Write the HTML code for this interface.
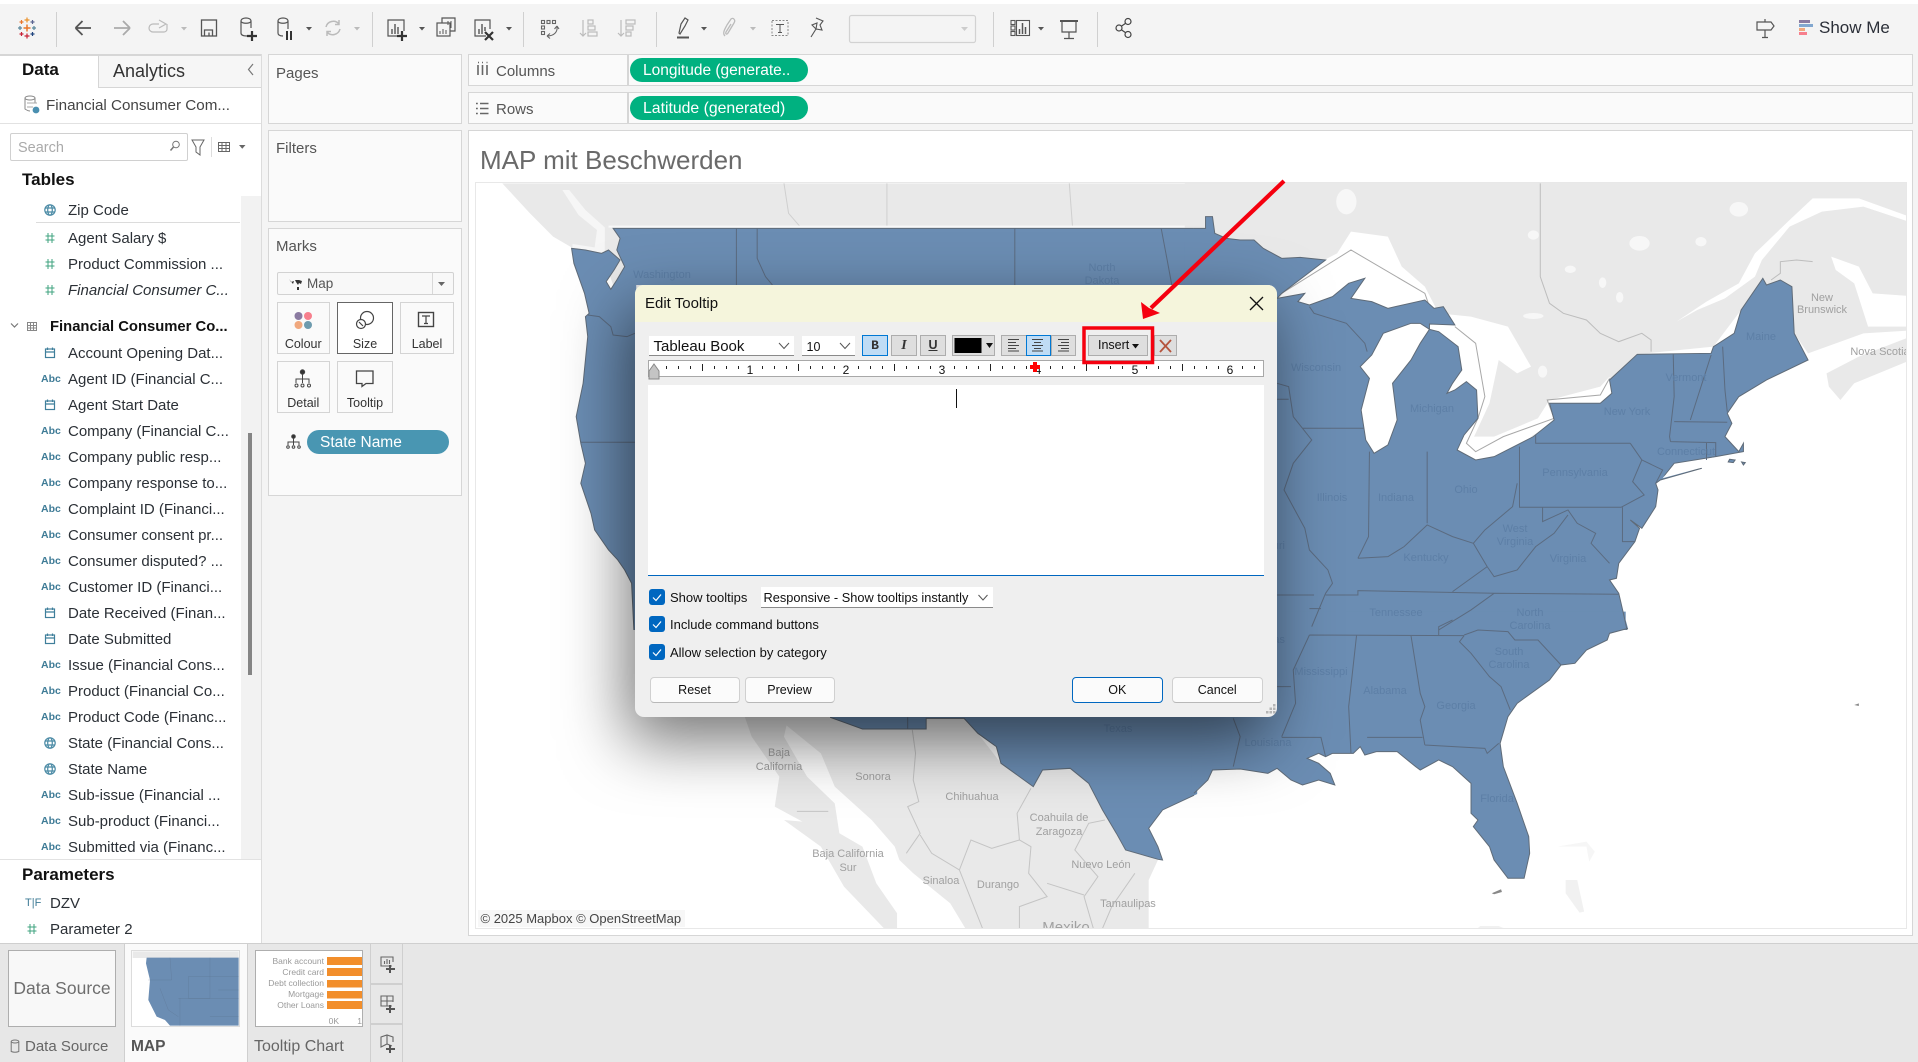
<!DOCTYPE html>
<html lang="en">
<head>
<meta charset="utf-8">
<title>Edit Tooltip</title>
<style>
html,body{margin:0;padding:0;width:1918px;height:1062px;overflow:hidden;background:#f4f4f4;font-family:"Liberation Sans",sans-serif;color:#2b3036}
.a{position:absolute;box-sizing:border-box}
.p{position:absolute;box-sizing:border-box;background:#fafafa;border:1.5px solid #d6d6d6}
.r{position:absolute;left:68px;height:20px;line-height:22px;font-size:15px;white-space:nowrap}
.abc{position:absolute;left:41px;height:14px;line-height:14px;font-size:10.5px;font-weight:bold;color:#3e7b96;white-space:nowrap}
.h{position:absolute;font-size:17px;font-weight:bold;color:#111;white-space:nowrap;line-height:22px;height:22px}
.l{position:absolute;font-size:15px;color:#555;white-space:nowrap;line-height:22px;height:20px}
.pill{position:absolute;color:#fff;font-size:15.5px;line-height:26px;white-space:nowrap;box-sizing:border-box}
.card{position:absolute;box-sizing:border-box;border:1.5px solid #d4d4d4;background:#fafafa;text-align:center;font-size:12.5px;color:#333;padding-top:33px;line-height:16px}
.d{position:absolute;font-size:13px;color:#111;white-space:nowrap}
.btn{position:absolute;box-sizing:border-box;background:#fbfbfb;border:1px solid #d0d0d0;border-bottom-color:#b8b8b8;border-radius:4px;text-align:center;font-size:12.5px;line-height:24px;color:#111;height:26px}
.tb{position:absolute;box-sizing:border-box;border:1px solid #adadad;background:#dedede;text-align:center;height:21px;line-height:19px;font-size:13px;color:#333}
.cb{position:absolute;left:649px;width:16px;height:16px;background:#0067c0;border-radius:3px}
.cmb{position:absolute;box-sizing:border-box;background:#fff;border-bottom:1px solid #8a8a8a;font-size:15px;color:#111;white-space:nowrap}
svg{position:absolute;left:0;top:0;overflow:visible}
svg text{font-family:"Liberation Sans",sans-serif}
</style>
</head>
<body>
<div class="a" style="left:0;top:0;width:1918px;height:4px;background:#fff"></div>

<svg width="1918" height="54" viewBox="0 0 1918 54" fill="none" stroke="#666" stroke-width="1.2">
 <g stroke="#d0d0d0" stroke-width="1"><path d="M56.5,12V47M372.5,12V47M523.5,12V47M656.5,12V47M993.5,12V47M1097.5,12V47"/></g>
 <g transform="translate(27,28)" stroke-width="1.2">
  <path d="M-3.5,0H3.5M0,-3.5V3.5" stroke="#e8762b" stroke-width="1.5"/>
  <path d="M-2.5,-8H2.5M0,-10.5V-5.5" stroke="#eb9129"/>
  <path d="M-2.5,8H2.5M0,5.500V10.500" stroke="#c72035"/>
  <path d="M-9,0H-5M-7,-2V2" stroke="#5b879b"/>
  <path d="M5,0H9M7,-2V2" stroke="#59879b"/>
  <path d="M-7.5,-6H-3.5M-5.5,-8V-4" stroke="#e8762b"/>
  <path d="M3.5,-6H7.5M5.5,-8V-4" stroke="#5b6591"/>
  <path d="M-7.5,6H-3.5M-5.5,4V8" stroke="#c72035"/>
  <path d="M3.5,6H7.5M5.5,4V8" stroke="#1f447e"/>
 </g>
 <path d="M75.5,28H91M75.5,28L82.5,21M75.5,28L82.5,35" stroke="#555" stroke-width="1.8"/>
 <path d="M114,28H130M130,28L123,21M130,28L123,35" stroke="#aaa" stroke-width="1.8"/>
 <g stroke="#bbb"><path d="M159,24H153a4,4 0 0 0 0,8H164a3,3 0 0 0 3,-3V24M159,20L166,24L159,28"/></g>
 <path d="M181,27h6l-3,3.5z" fill="#bbb" stroke="none"/>
 <g transform="translate(209,28)" stroke="#555" stroke-width="1.3"><rect x="-7.5" y="-8" width="15" height="16"/><path d="M-4.5,8V2H3.5V8M0,8V4.5"/></g>
 <g transform="translate(247,27)" stroke="#555"><path d="M-6,-6C-6,-10 4,-10 4,-6V1M-6,-6V6Q-6,9 0,9M-6,-6C-6,-3 4,-3 4,-6"/><path d="M5,4V14M0,9H10" stroke="#333" stroke-width="2.2"/></g>
 <g transform="translate(284,27)" stroke="#555"><path d="M-6,-6C-6,-10 4,-10 4,-6V2M-6,-6V6Q-6,9 -1,9M-6,-6C-6,-3 4,-3 4,-6"/><path d="M3,4V13M7,4V13" stroke="#333" stroke-width="2"/></g>
 <path d="M306,27h6l-3,3.5z" fill="#555" stroke="none"/>
 <g transform="translate(333,28)" stroke="#bbb" stroke-width="1.5"><path d="M-7,-1A7.5,7.5 0 0 1 6,-4M7,1A7.5,7.5 0 0 1 -6,4M6,-8V-3.5H2M-6,8V3.5H-2"/></g>
 <path d="M354,27h6l-3,3.5z" fill="#bbb" stroke="none"/>
 <g transform="translate(396,28)" stroke="#555"><path d="M3,8H-8V-8H8V3"/><path d="M-4,6V1M-1,6V-4M2,6V-1" stroke-width="1.4"/><path d="M6,3V13M1,8H11" stroke="#333" stroke-width="2.2"/></g>
 <path d="M419,27h6l-3,3.5z" fill="#555" stroke="none"/>
 <g transform="translate(446,27)" stroke="#555"><path d="M-4,-4V-9H9V4H4"/><rect x="-9" y="-4" width="13" height="13"/><path d="M-6,7V4M-3,7V2M0,7V3M2,-2V-6M5,1V-6" stroke-width="1"/></g>
 <g transform="translate(483,28)" stroke="#555"><path d="M3,8H-8V-8H7V1"/><path d="M-4,6V1M-1,6V-4M2,3V-1" stroke-width="1.4"/><path d="M2,4L10,12M10,4L2,12" stroke="#333" stroke-width="2.2"/></g>
 <path d="M506,27h6l-3,3.5z" fill="#555" stroke="none"/>
 <g transform="translate(549,28)" stroke="#666" stroke-width="1.1"><rect x="-7.5" y="-7.5" width="3" height="3"/><rect x="-2" y="-7.5" width="3" height="3"/><rect x="3.5" y="-7.5" width="3" height="3"/><rect x="-7.5" y="-2" width="3" height="3"/><rect x="-7.5" y="3.5" width="3" height="3"/><path d="M8,-2C9,4 5,8 -2,8M-2,8L1,5.5M-2,8L1,10.5M8,-2L5.5,1M8,-2L10,1"/></g>
 <g transform="translate(589,28)" stroke="#bbb"><path d="M-6,-8V8M-9,5L-6,8L-3,5"/><rect x="-1" y="-8" width="5" height="4"/><rect x="-1" y="-2" width="7" height="4"/><rect x="-1" y="4" width="9" height="4"/></g>
 <g transform="translate(627,28)" stroke="#bbb"><path d="M-6,-8V8M-9,5L-6,8L-3,5"/><rect x="-1" y="-8" width="9" height="4"/><rect x="-1" y="-2" width="7" height="4"/><rect x="-1" y="4" width="5" height="4"/></g>
 <g transform="translate(683,28)" stroke="#555"><path d="M-4,5L-2,-4L2,-10L5,-8L2,-2L-3,6Z"/><path d="M-6,9.5H6" stroke-width="2"/></g>
 <path d="M701,27h6l-3,3.5z" fill="#555" stroke="none"/>
 <g transform="translate(729,28)" stroke="#bbb" stroke-width="1.3"><path d="M-4,8C-7,5 -4,1 -2,-3L2,-9C4,-11 7,-8 5,-5L-1,5C-2,7 -4,6 -3,4L2,-4"/></g>
 <path d="M750,27h6l-3,3.5z" fill="#bbb" stroke="none"/>
 <g transform="translate(780,28)" stroke="#888" stroke-width="1"><rect x="-8" y="-7.5" width="16" height="15" stroke-dasharray="2 1.5"/><path d="M-4,-3.5H4M0,-3.5V4.5M-2,4.5H2" stroke="#555"/></g>
 <g transform="translate(817,28)" stroke="#555" stroke-width="1.100"><path d="M-1,-10L6,-7L3,-3L5,2L-1,1L-6,9M-1,1L-5,-3L0,-5Z"/></g>
 <rect x="849.5" y="15.5" width="126" height="27" rx="2" fill="#f4f4f4" stroke="#d2d2d2"/>
 <path d="M961,27h7l-3.5,4z" fill="#ccc" stroke="none"/>
 <g transform="translate(1020,28)" stroke="#555" stroke-width="1.1"><rect x="-9" y="-7.5" width="4" height="4"/><rect x="-9" y="-2" width="4" height="4"/><rect x="-9" y="3.5" width="4" height="4"/><rect x="-3.5" y="-7.5" width="13" height="15"/><path d="M-0.5,6V1M2.5,6V-5M5.5,6V-1" stroke-width="1.5"/></g>
 <path d="M1038,27h6l-3,3.5z" fill="#555" stroke="none"/>
 <g transform="translate(1069,28)" stroke="#555"><path d="M-9,-7H9" stroke-width="2"/><path d="M-7,-7V4H7V-7M0,4V10M-5,10.5H5"/></g>
 <g transform="translate(1124,28)" stroke="#444"><circle cx="4" cy="-6.5" r="3"/><circle cx="-5" cy="0" r="3"/><circle cx="4" cy="6.5" r="3"/><path d="M1.7,-4.7L-2.7,-1.8M-2.7,1.8L1.7,4.7"/></g>
 <g transform="translate(1765,28)" stroke="#555"><path d="M-8,-6H6L9,-2L6,2H-8ZM0,-9V-6M0,2V9M-3,9.5H3"/></g>
 <g stroke="none"><rect x="1799" y="20" width="11" height="3" fill="#8b7ba1"/><rect x="1799" y="24" width="14" height="3" fill="#82a7cf"/><rect x="1799" y="28" width="6" height="3" fill="#f0a87e"/><rect x="1799" y="32" width="8" height="3" fill="#f77f8d"/></g>
</svg>
<div class="a" style="left:1819px;top:18px;height:20px;line-height:20px;font-size:17px;color:#2b2f38;white-space:nowrap">Show Me</div>

<!-- data pane -->
<div class="a" style="left:0;top:54px;width:261.5px;height:889px;background:#fff;border-right:1.5px solid #dcdcdc"></div>
<div class="a" style="left:98px;top:54px;width:163px;height:33.5px;background:#f6f6f6;border:1.5px solid #d6d6d6;border-right:0"></div>
<div class="a" style="left:0;top:54px;width:261px;height:1.5px;background:#d6d6d6"></div>
<div class="h" style="left:22px;top:59px">Data</div>
<div class="h" style="left:113px;top:60px;font-weight:normal;color:#333;font-size:18px">Analytics</div>
<div class="a" style="left:0;top:122.5px;width:261px;height:1.5px;background:#e2e2e2"></div>
<div class="l" style="left:46px;top:94.5px;color:#444;font-size:15.2px">Financial Consumer Com...</div>
<div class="a" style="left:10px;top:133px;width:178px;height:28px;border:1.5px solid #d0d0d0;border-radius:2px;background:#fff"></div>
<div class="l" style="left:18px;top:136.5px;color:#aaa;font-size:14.5px">Search</div>
<div class="h" style="left:22px;top:169px">Tables</div>
<div class="a" style="left:241px;top:196px;width:20px;height:663px;background:#f2f2f2"></div>
<div class="a" style="left:248px;top:433px;width:4px;height:242px;background:#858585"></div>
<div class="a" style="left:36px;top:222px;width:204px;height:1px;background:#dcdcdc"></div>
<div class="a" style="left:0;top:858.5px;width:261px;height:1.5px;background:#e2e2e2"></div>

<svg width="262" height="943" viewBox="0 0 262 943" fill="none">
 <defs>
  <g id="hs" stroke="#3fa37f" stroke-width="1"><path d="M-4.5,-2H4.5M-4.5,2H4.5M-2,-5V5M2,-5V5"/></g>
  <g id="gl" stroke="#4a8aa5" stroke-width="1.2"><circle r="5.2"/><ellipse rx="2.3" ry="5.2"/><path d="M-5,-2H5M-5,2H5"/></g>
  <g id="dt" stroke="#3f7f9b" stroke-width="1.2"><rect x="-4.5" y="-4" width="9" height="8.5"/><path d="M-4.5,-1H4.5M-2.5,-5.5V-3M2.5,-5.5V-3"/></g>
 </defs>
 <path d="M253,64L248.5,69.5L253,75" stroke="#777" stroke-width="1.2"/>
 <g transform="translate(31,105)" stroke="#888"><ellipse cx="-1" cy="-7" rx="5" ry="2"/><path d="M-6,-7V4Q-3,6 -1,6M4,-7V-2"/><path d="M-4,-2L6,-2M-4,2H2" stroke="#aaa"/><circle cx="5" cy="5" r="3.4" fill="#4a8fb0" stroke="none"/></g>
 <g transform="translate(175,146)" stroke="#777"><circle cx="1" cy="-1.5" r="3.3"/><path d="M-1.5,1L-4.5,4.5" stroke-width="1.5"/></g>
 <path d="M192,140H204L200,147V155L196,152V147Z" stroke="#666"/>
 <path d="M211.5,137V157" stroke="#ddd"/>
 <g stroke="#666" stroke-width="1"><rect x="218.5" y="142.5" width="11" height="9"/><path d="M218.5,145.5H229.5M218.5,148.5H229.5M222,142.5V151.5M226,142.5V151.5"/></g>
 <path d="M239,145h6.5l-3.25,3.8z" fill="#666"/>
 <use href="#gl" x="50" y="210"/>
 <use href="#hs" x="50" y="238"/><use href="#hs" x="50" y="264"/><use href="#hs" x="50" y="290"/>
 <path d="M11,323.5L14.5,327L18,323.5" stroke="#777" stroke-width="1.2"/>
 <g stroke="#888" stroke-width="1"><rect x="27.5" y="322.5" width="9" height="8" /><path d="M27.5,325.5H36.5M27.5,328H36.5M30.5,322.5V330.5M33.5,322.5V330.5"/></g>
 <use href="#dt" x="50" y="353"/><use href="#dt" x="50" y="405"/>
 <use href="#dt" x="50" y="613"/><use href="#dt" x="50" y="639"/>
 <use href="#gl" x="50" y="743"/><use href="#gl" x="50" y="769"/>
 <use href="#hs" x="32" y="929"/>
</svg>

<div class="r" style="top:199.5px">Zip Code</div>
<div class="r" style="top:228px">Agent Salary $</div>
<div class="r" style="top:254px">Product Commission ...</div>
<div class="r" style="top:280px;font-style:italic">Financial Consumer C...</div>
<div class="r" style="top:316px;left:50px;font-weight:bold;color:#111;font-size:14.8px">Financial Consumer Co...</div>
<div class="r" style="top:343px">Account Opening Dat...</div>
<div class="abc" style="top:372px">Abc</div><div class="r" style="top:369px">Agent ID (Financial C...</div>
<div class="r" style="top:395px">Agent Start Date</div>
<div class="abc" style="top:424px">Abc</div><div class="r" style="top:421px">Company (Financial C...</div>
<div class="abc" style="top:450px">Abc</div><div class="r" style="top:447px">Company public resp...</div>
<div class="abc" style="top:476px">Abc</div><div class="r" style="top:473px">Company response to...</div>
<div class="abc" style="top:502px">Abc</div><div class="r" style="top:499px">Complaint ID (Financi...</div>
<div class="abc" style="top:528px">Abc</div><div class="r" style="top:525px">Consumer consent pr...</div>
<div class="abc" style="top:554px">Abc</div><div class="r" style="top:551px">Consumer disputed? ...</div>
<div class="abc" style="top:580px">Abc</div><div class="r" style="top:577px">Customer ID (Financi...</div>
<div class="r" style="top:603px">Date Received (Finan...</div>
<div class="r" style="top:629px">Date Submitted</div>
<div class="abc" style="top:658px">Abc</div><div class="r" style="top:655px">Issue (Financial Cons...</div>
<div class="abc" style="top:684px">Abc</div><div class="r" style="top:681px">Product (Financial Co...</div>
<div class="abc" style="top:710px">Abc</div><div class="r" style="top:707px">Product Code (Financ...</div>
<div class="r" style="top:733px">State (Financial Cons...</div>
<div class="r" style="top:759px">State Name</div>
<div class="abc" style="top:788px">Abc</div><div class="r" style="top:785px">Sub-issue (Financial ...</div>
<div class="abc" style="top:814px">Abc</div><div class="r" style="top:811px">Sub-product (Financi...</div>
<div class="abc" style="top:840px">Abc</div><div class="r" style="top:837px">Submitted via (Financ...</div>
<div class="h" style="left:22px;top:864px">Parameters</div>
<div class="abc" style="top:896px;left:25px;color:#3e7b96;font-weight:normal;font-size:11px">T|F</div>
<div class="r" style="top:892.5px;left:50px">DZV</div>
<div class="r" style="top:918.5px;left:50px">Parameter 2</div>

<!-- cards -->
<div class="p" style="left:268px;top:54px;width:193.5px;height:69.5px"></div>
<div class="l" style="left:276px;top:63px">Pages</div>
<div class="p" style="left:268px;top:130px;width:193.5px;height:91.5px"></div>
<div class="l" style="left:276px;top:138px">Filters</div>
<div class="p" style="left:268px;top:228px;width:193.5px;height:268px"></div>
<div class="l" style="left:276px;top:236px">Marks</div>
<div class="a" style="left:276.5px;top:272px;width:177px;height:23px;border:1.5px solid #d2d2d2;border-radius:2px;background:#f8f8f8"></div>
<div class="a" style="left:431.5px;top:273px;width:1px;height:21px;background:#d8d8d8"></div>
<div class="l" style="left:307px;top:273px;font-size:13.5px">Map</div>
<div class="card" style="left:276.5px;top:302px;width:53.5px;height:52px">Colour</div>
<div class="card" style="left:337px;top:302px;width:56px;height:52px;background:#fff;border-color:#666">Size</div>
<div class="card" style="left:400px;top:302px;width:54px;height:52px">Label</div>
<div class="card" style="left:276.5px;top:361px;width:53.5px;height:52px">Detail</div>
<div class="card" style="left:337px;top:361px;width:56px;height:52px">Tooltip</div>
<div class="pill" style="left:307px;top:430px;width:142px;height:24px;background:#4996b2;border-radius:12px;padding-left:13px">State Name</div>
<svg width="480" height="500" viewBox="0 0 480 500" fill="none">
 <g fill="#333" stroke="none"><path d="M289,279l2,3 3,-1 -1,3zM295,280h4l3,1 -1,3 -2,-1 -1,2 -2,-3zM297,287h2v3h-2z"/></g>
 <path d="M438,282h7l-3.5,4z" fill="#666"/>
 <circle cx="298.5" cy="316" r="4" fill="#8b7ba1"/><circle cx="308" cy="316" r="4" fill="#f77f8d"/>
 <circle cx="298.5" cy="325" r="4" fill="#f0a87e"/><circle cx="308" cy="325" r="4" fill="#6d9bae"/>
 <g stroke="#444" stroke-width="1.2"><circle cx="367" cy="318" r="6.5"/><circle cx="361" cy="324" r="4.5" fill="#fff"/><path d="M359,322L363,326"/></g>
 <g stroke="#444" stroke-width="1.2"><rect x="418.5" y="312.5" width="15" height="14" stroke-width="1.4"/><path d="M422,316H430M426,316V323.5M424,323.5H428"/></g>
 <g stroke="#444" stroke-width="1"><circle cx="302.5" cy="372" r="2.2" fill="#333"/><path d="M302.5,374V379M296,383V379H309V383M302.5,379V383"/><circle cx="296.5" cy="385.5" r="1.5" fill="#fff"/><circle cx="302.5" cy="385.5" r="1.5" fill="#fff"/><circle cx="309" cy="385.5" r="1.5" fill="#fff"/></g>
 <path d="M356.5,371H373V383.5H366L362,386.5V383.5H356.5Z" stroke="#444" stroke-width="1.3"/>
 <g stroke="#444" stroke-width="1"><circle cx="293.5" cy="436.5" r="1.8" fill="#333"/><path d="M293.5,438V442M288,445V442H299V445M293.5,442V445"/><circle cx="288" cy="447" r="1.3"/><circle cx="293.5" cy="447" r="1.3"/><circle cx="299" cy="447" r="1.3"/></g>
</svg>

<!-- shelves -->
<div class="p" style="left:468px;top:54px;width:1445px;height:32px"></div>
<div class="p" style="left:468px;top:92px;width:1445px;height:31.5px"></div>
<div class="a" style="left:627px;top:54px;width:1.5px;height:32px;background:#d6d6d6"></div>
<div class="a" style="left:627px;top:92px;width:1.5px;height:31.5px;background:#d6d6d6"></div>
<div class="l" style="left:496px;top:61px">Columns</div>
<div class="l" style="left:496px;top:99px">Rows</div>
<svg width="500" height="125" viewBox="0 0 500 125" fill="none" stroke="#666" stroke-width="1.6"><path d="M478,65V75M482.5,65V75M487,65V75" /><path d="M478,62.5h1M482,62.5h1M486.500,62.5h1"/><path d="M476,103.500h1.800M480,103.500H488.500M476,108.500h1.800M480,108.500H488.500M476,113.500h1.800M480,113.500H488.500"/></svg>
<div class="pill" style="left:630px;top:58px;width:178px;height:24px;background:#00b180;border-radius:12px;padding-left:13px">Longitude (generate..</div>
<div class="pill" style="left:630px;top:96px;width:178px;height:24px;background:#00b180;border-radius:12px;padding-left:13px;font-size:15.8px">Latitude (generated)</div>

<!-- viz -->
<div class="a" style="left:468px;top:130px;width:1445px;height:805.500px;background:#fff;border:1.500px solid #d6d6d6"></div>
<div class="a" style="left:480px;top:143px;height:34px;line-height:34px;font-size:26px;color:#6a6a6a;white-space:nowrap">MAP mit Beschwerden</div>
<div class="a" style="left:475px;top:182px;width:1431.500px;height:746.500px;background:#fff;border:1px solid #e8e8e8"></div>

<svg width="1918" height="1062" viewBox="0 0 1918 1062" fill="none">
 <defs><clipPath id="mc"><rect x="476" y="183" width="1430" height="745"/></clipPath></defs>
 <g clip-path="url(#mc)">
  <!-- Canada west -->
  <g transform="matrix(.4617 0 0 .3333 470 170)">
   <path fill="#e9e9e9" d="M70,40H1600V420H330L285,250L220,232L180,200L130,130L100,85Z"/>
   <path fill="#f6f6f6" d="M200,60L215,60L250,120L292,172V250L222,232V222L270,232L275,180L235,135Z"/>
   <path fill="none" stroke="#cfcfcf" vector-effect="non-scaling-stroke" d="M680,40L690,130L715,170M903,40V170M1298,40L1305,170"/>
   <path fill="none" stroke="#f8f8f8" stroke-width="2" vector-effect="non-scaling-stroke" d="M300,170H1600"/>
  </g>
  <!-- Canada east -->
  <g transform="matrix(.4617 0 0 .3333 1194 170)">
   <path fill="#e9e9e9" d="M-20,37H1570V480L1450,490L1330,550L1300,490L1232,325L1185,420L1125,530L960,553L800,800H-20Z"/>
   <path fill="#e9e9e9" d="M1370,610L1440,560L1570,490V560L1430,640L1400,690L1375,650Z"/>
   <path fill="#fff" d="M180,390L240,300L310,250L340,185L420,200L450,290L500,350L530,430L600,440L680,470L730,590L700,610L660,570L640,700L600,820L650,800L745,745L770,690L880,650L900,620L905,690L780,760L640,870L570,840L300,600Z"/>
   <path fill="#fff" d="M1045,455L1110,395L1180,340L1215,250L1290,150L1340,85L1440,85L1570,150V165L1450,110L1360,125L1290,170L1230,270L1215,320L1150,385L1090,420Z"/>
   <path fill="#fff" d="M1380,260L1440,290L1470,370L1570,380V470L1460,470L1430,340L1390,300Z"/>
   <g fill="#f7f7f7"><ellipse cx="330" cy="95" rx="22" ry="38"/><ellipse cx="965" cy="220" rx="22" ry="22"/><ellipse cx="1098" cy="215" rx="12" ry="14"/><ellipse cx="735" cy="195" rx="12" ry="14"/><ellipse cx="735" cy="438" rx="22" ry="9"/><ellipse cx="885" cy="338" rx="8" ry="16"/><ellipse cx="815" cy="298" rx="12" ry="11"/><ellipse cx="922" cy="382" rx="8" ry="16"/><ellipse cx="755" cy="605" rx="10" ry="18"/><ellipse cx="1180" cy="118" rx="20" ry="22"/></g>
   <g fill="none" stroke="#bdbdbd"><path vector-effect="non-scaling-stroke" d="M750,40V320L770,400L800,430L850,450L880,490L920,515L970,490L990,510L990,545"/><path vector-effect="non-scaling-stroke" d="M1250,330L1270,310L1270,275L1305,270L1340,275"/><path vector-effect="non-scaling-stroke" stroke="#a8a8a8" d="M190,370L340,240L500,370L510,410M565,470L610,520L630,680L615,745L590,820L610,845L670,800L780,745L765,690L880,675L900,625"/></g>
  </g>
  <!-- Mexico -->
  <g transform="matrix(.4617 0 0 .3333 470 620)">
   <path fill="#e9e9e9" d="M595,290H690L680,350L730,470L790,550L800,640L850,680L880,790L925,880V930H900L810,800L760,680L680,600L720,605L660,560L670,470L610,350Z"/>
   <path fill="#e9e9e9" d="M680,290H1070L1100,340L1150,430L1220,500L1240,450L1300,445L1340,490L1400,640L1420,690L1490,720L1470,780V930H1075L1040,850L960,760L930,720L920,680L870,600L790,500L760,400L680,310Z"/>
   <g fill="none" stroke="#c4c4c4"><path vector-effect="non-scaling-stroke" d="M958,330L965,400L960,480L972,545L948,560L975,640L945,700M975,645L1000,700L1060,750L1110,925M1060,750L1085,660L1130,685L1190,660L1215,680L1210,760L1250,830L1190,860L1190,925M1215,505L1185,580L1190,660M1375,600L1340,610L1310,690L1360,770L1330,830L1350,925M1440,760L1390,860L1370,925M1250,790L1330,825M708,574H776"/></g>
  </g>
  <!-- USA fill -->
  <g fill="#6b8db3">
   <path transform="matrix(.4617 0 0 .3333 470 170)" d="M355,1380L350,1240L335,1200L320,1170L300,1140L270,1080L262,1030L240,940L250,880L240,820L230,740L245,640L255,500L250,440L258,430L248,370L225,280L220,235L250,240L285,250L300,240L325,270L312,300L295,335L305,358L318,330L335,290L318,240L325,205L310,175H1575V345H360V1380Z"/>
   <path transform="matrix(.4617 0 0 .3333 1194 170)" d="M-20,175H25V140H40L45,190L70,205L100,210L130,210L150,235L190,265L230,262L285,270L190,370L180,385L240,370L225,395L250,405L300,380L335,340L370,325L340,385L385,395L420,415L500,390L520,415L540,410L565,465L510,462L510,478L530,485L572,530L580,600L560,640L548,670L565,660L590,635L612,660L615,745L585,795L570,840L610,870L650,860L735,800L780,750L770,700L880,700L905,670L900,630L960,553L1120,550L1125,530L1170,490L1185,420L1232,325L1240,345L1270,330L1295,350L1300,490L1330,570L1240,630L1180,680L1155,730L1165,760L1150,800L1180,845L1190,820L1190,845L1130,860L1040,880L1020,915L1100,895L1010,930L1000,940L1005,960L1000,1010L970,1075L945,1050L965,1075L955,1115L920,1180L915,1225L900,1230L920,1270L930,1330L938,1380H-20Z"/>
   <path transform="matrix(.4617 0 0 .3333 470 620)" d="M780,288V292L850,327H988V295H1070L1100,340L1140,380L1150,430L1220,500L1240,450L1300,445L1340,490L1370,570L1400,640L1420,690L1490,718L1500,720L1490,680L1470,625L1500,570L1575,522V288Z"/>
   <path transform="matrix(.4617 0 0 .3333 1194 620)" d="M-5,523L30,480L40,450L100,447L160,460L180,445L210,480L235,495L270,480L305,495L295,460L270,430L245,415L270,400L285,410L300,400L345,400L360,380L370,405L395,395L440,395L480,440L490,450L530,420L560,440L600,490L600,580L615,600L605,620L640,680L650,720L680,775L715,775L727,700L725,650L700,550L670,440L663,370L680,290L700,250L770,180L795,135L825,130L850,90L895,60L900,40L940,25L935,0V-25H-5Z"/>
  </g>
  <!-- USA coast strokes -->
  <g fill="none" stroke="#5f6b78" stroke-width="1">
   <path transform="matrix(.4617 0 0 .3333 470 170)" vector-effect="non-scaling-stroke" d="M355,1380L350,1240L335,1200L320,1170L300,1140L270,1080L262,1030L240,940L250,880L240,820L230,740L245,640L255,500L250,440L258,430L248,370L225,280L220,235L250,240L285,250L300,240L325,270L312,300L295,335L305,358L318,330L335,290L318,240L325,205L310,175H1568"/>
   <path transform="matrix(.4617 0 0 .3333 1194 170)" vector-effect="non-scaling-stroke" d="M0,175H25V140H40L45,190L70,205L100,210L130,210L150,235L190,265L230,262L285,270L190,370L180,385L240,370L225,395L250,405L300,380L335,340L370,325L340,385L385,395L420,415L500,390L520,415L540,410L565,465L510,462L510,478L530,485L572,530L580,600L560,640L548,670L565,660L590,635L612,660L615,745L585,795L570,840L610,870L650,860L735,800L780,750L770,700L880,700L905,670L900,630L960,553L1120,550L1125,530L1170,490L1185,420L1232,325L1240,345L1270,330L1295,350L1300,490L1330,570L1240,630L1180,680L1155,730L1165,760L1150,800L1180,845L1190,820L1190,845L1130,860L1040,880L1020,915L1100,895L1010,930L1000,940L1005,960L1000,1010L970,1075L945,1050L965,1075L955,1115L920,1180L915,1225L900,1230L920,1270L930,1330L938,1380"/>
   <path transform="matrix(.4617 0 0 .3333 470 620)" vector-effect="non-scaling-stroke" d="M780,292L850,327H988V295H1070L1100,340L1140,380L1150,430L1220,500L1240,450L1300,445L1340,490L1370,570L1400,640L1420,690L1490,718L1500,720L1490,680L1470,625L1500,570L1568,526"/>
   <path transform="matrix(.4617 0 0 .3333 1194 620)" vector-effect="non-scaling-stroke" d="M0,520L30,480L40,450L100,447L160,460L180,445L210,480L235,495L270,480L305,495L295,460L270,430L245,415L270,400L285,410L300,400L345,400L360,380L370,405L395,395L440,395L480,440L490,450L530,420L560,440L600,490L600,580L615,600L605,620L640,680L650,720L680,775L715,775L727,700L725,650L700,550L670,440L663,370L680,290L700,250L770,180L795,135L825,130L850,90L895,60L900,40L940,25"/>
  </g>
  <g transform="matrix(.4617 0 0 .3333 1194 170)">
   <path fill="#fff" stroke="#5f6b78" vector-effect="non-scaling-stroke" d="M360,590L385,555L410,490L470,460L490,460L510,478L490,520L470,570L430,640L440,750L420,825L390,850L372,810L362,720L380,625Z"/>
   <path fill="#fff" d="M1015,925L1040,885L1130,862L1100,893Z"/>
   <path fill="#6b8db3" stroke="#5f6b78" vector-effect="non-scaling-stroke" d="M1160,868L1172,870L1168,878L1157,876ZM1186,876L1194,878L1190,885Z"/>
  </g>
  <!-- state lines -->
  <g fill="none" stroke="#5b6b80" stroke-width="1">
   <g transform="matrix(.4617 0 0 .3333 470 170)">
    <path vector-effect="non-scaling-stroke" d="M577,175V345M622,175V265L640,320L655,345M1180,175V345M1497,175L1510,270L1520,345M240,817H357M255,435L280,440L305,470L310,495L340,500L357,490"/>
   </g>
   <g transform="matrix(.4617 0 0 .3333 1194 170)">
    <path vector-effect="non-scaling-stroke" d="M505,845V1060M380,845L378,1100L355,1165M235,775H367M180,640L205,650L215,740L255,810L215,880L195,960L240,1075L250,1140L290,1200L300,1240L285,1270L255,1370M355,1165L420,1160L455,1130L505,1065L560,1100L605,1120M605,1120L635,1190M605,1120L630,1080L690,1010L700,940M705,830V1012H925M740,795V820H945M945,820L970,870L950,935L975,975L925,1012M970,870L1015,900L1000,940M755,1012V1055L810,1020L830,1060L870,1090L860,1120L900,1180M635,1190L650,1220L700,1200L740,1130L780,1090L810,1035M635,1190L560,1265M285,1275H355V1262L650,1270L920,1273M650,1270L600,1320L530,1380M1038,553L1040,680L1030,800L1032,815M1120,555L1075,750M1145,530L1150,660L1155,725M1040,755L1155,757M1032,815L1130,818V860M1110,818V870M250,410L260,430L330,460L370,520L375,545M180,688H205M180,1275H260M250,1316H275M928,1012V1115H955"/>
   </g>
   <g transform="matrix(.4617 0 0 .3333 1194 620)">
    <path vector-effect="non-scaling-stroke" d="M250,45L585,47M352,47L335,260L340,400M470,47L490,220L500,260L490,300L500,375M585,47L575,65L600,100L640,170L665,200L685,270M585,45L615,30L680,35L695,60H745L795,135M530,45V20L560,0M375,352H495M500,375L630,385L635,400L660,370M190,352H275L285,410M250,45L215,150L220,250L190,350M180,200H210M85,295L100,350L85,440"/>
   </g>
   <g transform="matrix(.4617 0 0 .3333 470 620)"><path vector-effect="non-scaling-stroke" d="M948,292V327"/></g>
  </g>
  <!-- small islands -->
  <g transform="matrix(.4617 0 0 .3333 1194 620)" fill="#f1f1f1"><path d="M805,780L830,780L845,875L835,878L805,820Z"/><path d="M620,918L660,918L680,930H610Z"/><path d="M787,680L850,665L868,695L856,725L850,680Z" fill="#f6f6f6"/><path fill="#888" d="M645,820L665,808L667,816L650,823ZM1430,255L1440,250L1440,258Z"/></g>
  <!-- map labels -->
  <g font-size="11" text-anchor="middle" fill="#5d7fa6">
   <text x="662" y="278">Washington</text><text x="1102" y="271">North</text><text x="1102" y="284">Dakota</text>
   <text x="1316" y="371">Wisconsin</text><text x="1432" y="412">Michigan</text><text x="1627" y="415">New York</text><text x="1686" y="381">Vermont</text><text x="1761" y="340">Maine</text><text x="1686" y="455">Connecticut</text><text x="1575" y="476">Pennsylvania</text><text x="1466" y="493">Ohio</text><text x="1332" y="501">Illinois</text><text x="1396" y="501">Indiana</text><text x="1515" y="532">West</text><text x="1515" y="545">Virginia</text><text x="1426" y="561">Kentucky</text><text x="1568" y="562">Virginia</text><text x="1396" y="616">Tennessee</text><text x="1530" y="616">North</text><text x="1530" y="629">Carolina</text><text x="1509" y="655">South</text><text x="1509" y="668">Carolina</text><text x="1321" y="675">Mississippi</text><text x="1385" y="694">Alabama</text><text x="1456" y="709">Georgia</text><text x="1268" y="746">Louisiana</text><text x="1497" y="802">Florida</text><text x="1118" y="732">Texas</text>
   <text x="1285" y="549" text-anchor="end">Missouri</text><text x="1285" y="643" text-anchor="end">Arkansas</text>
  </g>
  <g font-size="11" text-anchor="middle" fill="#a0a0a0">
   <text x="1822" y="301">New</text><text x="1822" y="313">Brunswick</text><text x="1880" y="355">Nova Scotia</text>
   <text x="779" y="756">Baja</text><text x="779" y="770">California</text><text x="873" y="780">Sonora</text><text x="972" y="800">Chihuahua</text><text x="1059" y="821">Coahuila de</text><text x="1059" y="835">Zaragoza</text><text x="848" y="857">Baja California</text><text x="848" y="871">Sur</text><text x="941" y="884">Sinaloa</text><text x="998" y="888">Durango</text><text x="1101" y="868">Nuevo León</text><text x="1128" y="907">Tamaulipas</text>
   <text x="1066" y="932" font-size="15">Mexiko</text>
  </g>
 </g>
</svg>
<div class="a" style="left:478px;top:909.500px;width:207px;height:17.500px;background:rgba(245,245,245,.8);font-size:13px;line-height:18px;color:#444;padding-left:2.500px;white-space:nowrap">© 2025 Mapbox © OpenStreetMap</div>

<!-- bottom tabs -->
<div class="a" style="left:0;top:943px;width:1918px;height:119px;background:#e7e7e7;border-top:1.500px solid #cfcfcf"></div>
<div class="a" style="left:123.500px;top:944px;width:124px;height:118px;background:#fafafa;border-left:1.500px solid #cfcfcf;border-right:1.500px solid #cfcfcf"></div>
<div class="a" style="left:370px;top:944px;width:33px;height:118px;border-left:1.500px solid #cfcfcf;border-right:1.500px solid #cfcfcf"></div>
<div class="a" style="left:371px;top:983px;width:31px;height:1.500px;background:#cfcfcf"></div>
<div class="a" style="left:371px;top:1023px;width:31px;height:1.500px;background:#cfcfcf"></div>
<div class="a" style="left:8px;top:950px;width:108px;height:77px;background:#f8f8f8;border:1.500px solid #aeaeae;text-align:center;font-size:17.500px;line-height:75px;color:#6e6e6e;white-space:nowrap">Data Source</div>
<div class="l" style="left:25px;top:1036px;color:#666">Data Source</div>
<div class="a" style="left:131px;top:950px;width:109px;height:77px;background:#fff;border:1.500px solid #dcdcdc"></div>
<div class="l" style="left:131px;top:1036px;color:#555;font-weight:bold;font-size:15.500px">MAP</div>
<div class="a" style="left:255px;top:950px;width:108px;height:77px;background:#fff;border:1.500px solid #aeaeae"></div>
<div class="l" style="left:254px;top:1036px;color:#666;font-size:16px">Tooltip Chart</div>
<svg width="410" height="1062" viewBox="0 0 410 1062" fill="none">
 <g stroke="#777" stroke-width="1"><ellipse cx="15" cy="1041.500" rx="3.800" ry="1.500"/><path d="M11.200,1041.500V1051.500Q15,1053 18.800,1051.500V1041.500"/></g>
 <g transform="matrix(.3333 0 0 .3333 0 850)">
  <path fill="#e9e9e9" d="M398,304H716V324H398Z"/>
  <path fill="#6b8db3" d="M440,323H716V527H510L495,510L470,500L445,450L450,390L438,340Z"/>
  <g stroke="#5d7592" stroke-width="1.200" opacity=".7"><path d="M510,323L515,390H445M480,415L505,480L535,500M565,380H630V445H565V380M630,323V380H716M655,420H716M535,445H716M630,500H716M540,445V527"/></g>
 </g>
 <g fill="#f28e2b"><rect x="327" y="957" width="35" height="8"/><rect x="327" y="968" width="35" height="8"/><rect x="327" y="980" width="35" height="7.500"/><rect x="327" y="991" width="35" height="7.500"/><rect x="327" y="1001" width="35" height="8"/></g>
 <g font-size="8.500" fill="#9a9a9a" text-anchor="end"><text x="324" y="964">Bank account</text><text x="324" y="975">Credit card</text><text x="324" y="986">Debt collection</text><text x="324" y="997">Mortgage</text><text x="324" y="1008">Other Loans</text><text x="339" y="1024">0K</text><text x="362" y="1024">1</text></g>
 <g stroke="#666" stroke-width="1.100">
  <path d="M392,966H381V957H393V962M384.500,964V961M387,964V959M389.500,964V960"/><path d="M390,965V973M386,969H395" stroke="#555" stroke-width="2"/>
  <path d="M392,1006H381V996H393V1002M381,1001H393M387,996V1006"/><path d="M390,1005V1013M386,1009H395" stroke="#555" stroke-width="2"/>
  <path d="M392,1046L387,1044L381,1047V1037L387,1035L393,1037V1042M387,1035V1044"/><path d="M390,1045V1053M386,1049H395" stroke="#555" stroke-width="2"/>
 </g>
</svg>

<!-- dialog -->
<div class="a" style="left:635px;top:285px;width:642px;height:432px;background:#efefef;border-radius:9px;box-shadow:-8px 24px 64px rgba(0,0,0,.55)"></div>
<div class="a" style="left:635px;top:285px;width:642px;height:37px;background:#f5f5dc;border-radius:9px 9px 0 0"></div>
<div class="d" style="left:645px;top:294px;font-size:15px;line-height:20px">Edit Tooltip</div>

<div class="cmb" style="left:648.500px;top:336px;width:145.500px;height:20px;line-height:22px;padding-left:5px;font-size:15px">Tableau Book</div>
<div class="cmb" style="left:802px;top:336px;width:53px;height:20px;line-height:22px;padding-left:4.500px;font-size:12.500px">10</div>
<div class="tb" style="left:862px;top:335px;width:26px;background:#bfdcf5;border-color:#0078d4;font-weight:bold;font-family:'Liberation Mono',monospace;font-size:13px">B</div>
<div class="tb" style="left:891px;top:335px;width:26px;font-style:italic;font-weight:bold;font-family:'Liberation Serif',serif;font-size:14px">I</div>
<div class="tb" style="left:920px;top:335px;width:26px;font-weight:bold;text-decoration:underline;font-size:12.500px">U</div>
<div class="tb" style="left:952px;top:335px;width:43px"></div>
<div class="tb" style="left:1001px;top:335px;width:25.500px"></div>
<div class="tb" style="left:1026px;top:335px;width:25px;background:#bfdcf5;border-color:#0078d4"></div>
<div class="tb" style="left:1051px;top:335px;width:25px"></div>
<div class="tb" style="left:1088px;top:335px;width:60px;text-align:left;padding-left:9px;font-size:12.500px;color:#111">Insert</div>
<div class="tb" style="left:1154px;top:335px;width:23px"></div>

<div class="a" style="left:648px;top:360px;width:615.500px;height:17px;background:#fff;border:1px solid #a8a8a8"></div>
<div class="a" style="left:648px;top:385px;width:615.500px;height:191px;background:#fff;border-bottom:1.500px solid #0067c0"></div>
<div class="a" style="left:955.500px;top:389px;width:1.500px;height:19px;background:#111"></div>

<div class="cb" style="top:589px"></div>
<div class="cb" style="top:616px"></div>
<div class="cb" style="top:644px"></div>
<div class="d" style="left:670px;top:588.500px;line-height:17px">Show tooltips</div>
<div class="d" style="left:670px;top:615.500px;line-height:17px">Include command buttons</div>
<div class="d" style="left:670px;top:643.500px;line-height:17px">Allow selection by category</div>
<div class="cmb" style="left:760.500px;top:587px;width:232.500px;height:21px;line-height:22px;padding-left:3px;font-size:12.800px">Responsive - Show tooltips instantly</div>

<div class="btn" style="left:649.500px;top:677px;width:90px">Reset</div>
<div class="btn" style="left:744.500px;top:677px;width:90px">Preview</div>
<div class="btn" style="left:1072px;top:677px;width:90.500px;border-color:#0067c0">OK</div>
<div class="btn" style="left:1172px;top:677px;width:90.500px">Cancel</div>

<svg width="1918" height="1062" viewBox="0 0 1918 1062" fill="none">
 <defs>
  <pattern id="rul" x="654" y="360" width="96" height="17" patternUnits="userSpaceOnUse">
   <path stroke="#222" stroke-width="1" d="M12.500,6V9M24.500,6V9M36.500,6V9M48.500,4V11M60.500,6V9M72.500,6V9M84.500,6V9"/>
  </pattern>
 </defs>
 <path d="M1250,297L1263,310M1263,297L1250,310" stroke="#111" stroke-width="1.300"/>
 <path d="M779,343L784,348.500L789,343M840,343L845,348.500L850,343" stroke="#555" stroke-width="1"/>
 <path d="M978.500,595L983,600L987.500,595" stroke="#555" stroke-width="1"/>
 <rect x="954.500" y="338" width="27" height="15" fill="#000"/>
 <path d="M986,343h7l-3.500,5zM1132,344h7l-3.500,4.500z" fill="#111"/>
 <g stroke="#444" stroke-width="1"><path d="M1008,339.500H1019M1008,342.500H1016M1008,345.500H1019M1008,348.500H1016M1008,351H1019"/><path d="M1032,339.500H1043M1034,342.500H1041M1032,345.500H1043M1034,348.500H1041M1032,351H1043"/><path d="M1058,339.500H1069M1061,342.500H1069M1058,345.500H1069M1061,348.500H1069M1058,351H1069"/></g>
 <path d="M1160,340L1171,352M1171,340L1160,352" stroke="#b5533c" stroke-width="1.800"/>
 <rect x="654" y="361" width="608" height="15" fill="url(#rul)"/>
 <g font-size="12" text-anchor="middle" fill="#111"><text x="750" y="374">1</text><text x="846" y="374">2</text><text x="942" y="374">3</text><text x="1038" y="374">4</text><text x="1135" y="374">5</text><text x="1230" y="374">6</text></g>
 <path d="M654,364L659,371V379H649V371Z" fill="#c4c4c4" stroke="#888" stroke-width="1"/>
 <path d="M1035,362V372M1030,367H1040" stroke="#f00" stroke-width="4"/>
 <g stroke="#fff" stroke-width="1.200"><path d="M653,597.500L656,600.500L661,594.500"/><path d="M653,624.500L656,627.500L661,621.500"/><path d="M653,652.500L656,655.500L661,649.500"/></g>
 <g fill="#b5b5b5"><rect x="1273" y="704" width="2.500" height="2.500"/><rect x="1269.500" y="707.500" width="2.500" height="2.500"/><rect x="1273" y="707.500" width="2.500" height="2.500"/><rect x="1266" y="711" width="2.500" height="2.500"/><rect x="1269.500" y="711" width="2.500" height="2.500"/><rect x="1273" y="711" width="2.500" height="2.500"/></g>
 <rect x="1084" y="328" width="68.500" height="34.500" fill="none" stroke="#f5000f" stroke-width="3.500"/>
 <path d="M1284,181L1151,308" stroke="#f5000f" stroke-width="4.200"/>
 <path d="M1143,319L1141,302L1149,308L1160,313Z" fill="#f5000f"/>
</svg>
</body>
</html>
